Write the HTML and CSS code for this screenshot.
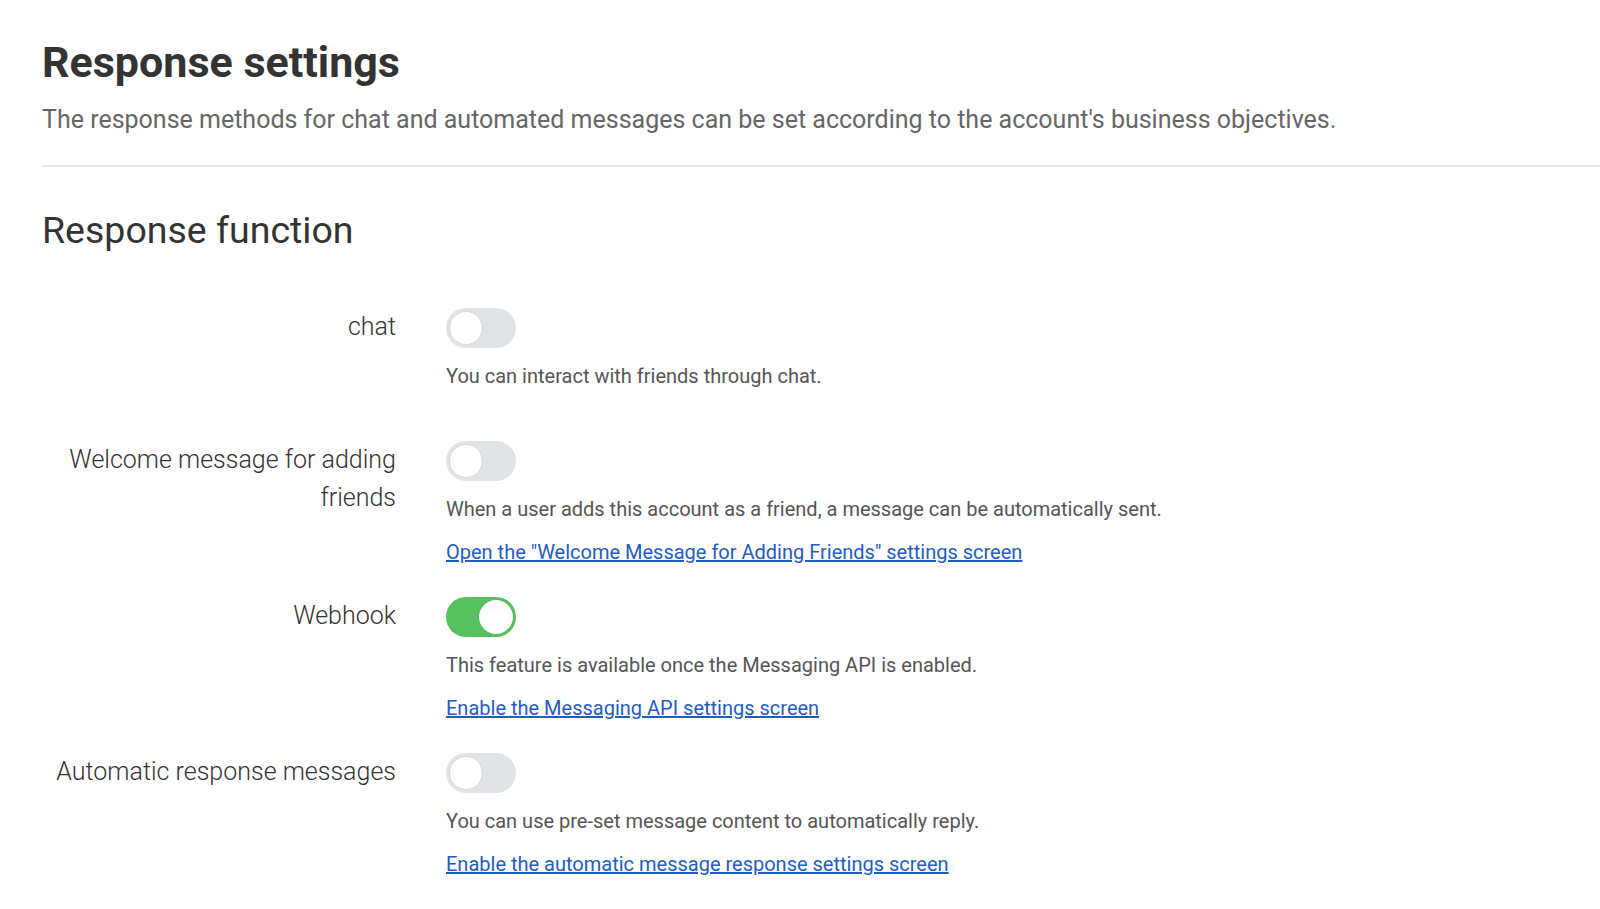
FILE: index.html
```html
<!DOCTYPE html>
<html lang="en">
<head>
<meta charset="utf-8">
<title>Response settings</title>
<link rel="stylesheet" href="styles.css">
</head>
<body>
<header class="page-header">
  <h1 class="page-title">Response settings</h1>
  <p class="page-lead">The response methods for chat and automated messages can be set according to the account's business objectives.</p>
</header>
<hr class="divider">
<main class="section">
  <h2 class="section-title">Response function</h2>
  <div class="settings">
    <div class="row row--short">
      <div class="label">chat</div>
      <div class="control">
        <span class="toggle"><span class="knob"></span></span>
        <p class="desc">You can interact with friends through chat.</p>
      </div>
    </div>
    <div class="row">
      <div class="label">Welcome message for adding friends</div>
      <div class="control">
        <span class="toggle"><span class="knob"></span></span>
        <p class="desc">When a user adds this account as a friend, a message can be automatically sent.</p>
        <p class="link-line"><a href="#" class="link">Open the "Welcome Message for Adding Friends" settings screen</a></p>
      </div>
    </div>
    <div class="row">
      <div class="label">Webhook</div>
      <div class="control">
        <span class="toggle toggle--on"><span class="knob"></span></span>
        <p class="desc">This feature is available once the Messaging API is enabled.</p>
        <p class="link-line"><a href="#" class="link">Enable the Messaging API settings screen</a></p>
      </div>
    </div>
    <div class="row">
      <div class="label">Automatic response messages</div>
      <div class="control">
        <span class="toggle"><span class="knob"></span></span>
        <p class="desc">You can use pre-set message content to automatically reply.</p>
        <p class="link-line"><a href="#" class="link">Enable the automatic message response settings screen</a></p>
      </div>
    </div>
  </div>
</main>
</body>
</html>
```

FILE: styles.css
```css
html, body {
  margin: 0;
  padding: 0;
  background: #ffffff;
}
body {
  font-family: Roboto, "Liberation Sans", Arial, sans-serif;
  color: #333333;
  overflow: hidden;
}
.page-header {
  padding: 37px 0 0 42px;
}
.page-title {
  margin: 0;
  font-size: 43px;
  line-height: 50px;
  font-weight: 700;
  color: #333333;
}
.page-lead {
  margin: 17px 0 0;
  font-size: 25px;
  line-height: 32px;
  font-weight: 400;
  color: #666666;
}
.divider {
  margin: 29px 0 0 42px;
  border: 0;
  height: 2px;
  background: #e6e6e6;
}
.section {
  padding-left: 42px;
}
.section-title {
  margin: 42px 0 0;
  font-size: 37.5px;
  line-height: 42px;
  font-weight: 400;
  color: #333333;
}
.settings {
  margin-top: 57px;
  display: flex;
  flex-direction: column;
}
.row {
  display: grid;
  grid-template-columns: 354px 1fr;
  column-gap: 50px;
  padding-bottom: 31px;
}
.row--short {
  padding-bottom: 51px;
}
.label {
  text-align: right;
  font-family: "Roboto Light", Roboto, "Liberation Sans", Arial, sans-serif;
  font-size: 25px;
  line-height: 38px;
  font-weight: 300;
  color: #333333;
}
.control {
  display: flex;
  flex-direction: column;
  align-items: flex-start;
}
.toggle {
  display: block;
  position: relative;
  width: 70px;
  height: 40px;
  border-radius: 20px;
  background: #e1e4e6;
  box-sizing: border-box;
}
.knob {
  position: absolute;
  top: 3px;
  left: 3px;
  width: 34px;
  height: 34px;
  border-radius: 50%;
  background: #ffffff;
  box-sizing: border-box;
  border: 1px solid #d6d9db;
}
.toggle--on {
  background: #55c15e;
}
.toggle--on .knob {
  left: 33px;
  border-color: #ffffff;
}
.desc {
  margin: 14px 0 0;
  font-size: 20px;
  line-height: 28px;
  color: #555555;
}
.link-line {
  margin: 15px 0 0;
  font-size: 20px;
  line-height: 28px;
}
.link {
  color: #1f5cc4;
  text-decoration: underline;
}
```
